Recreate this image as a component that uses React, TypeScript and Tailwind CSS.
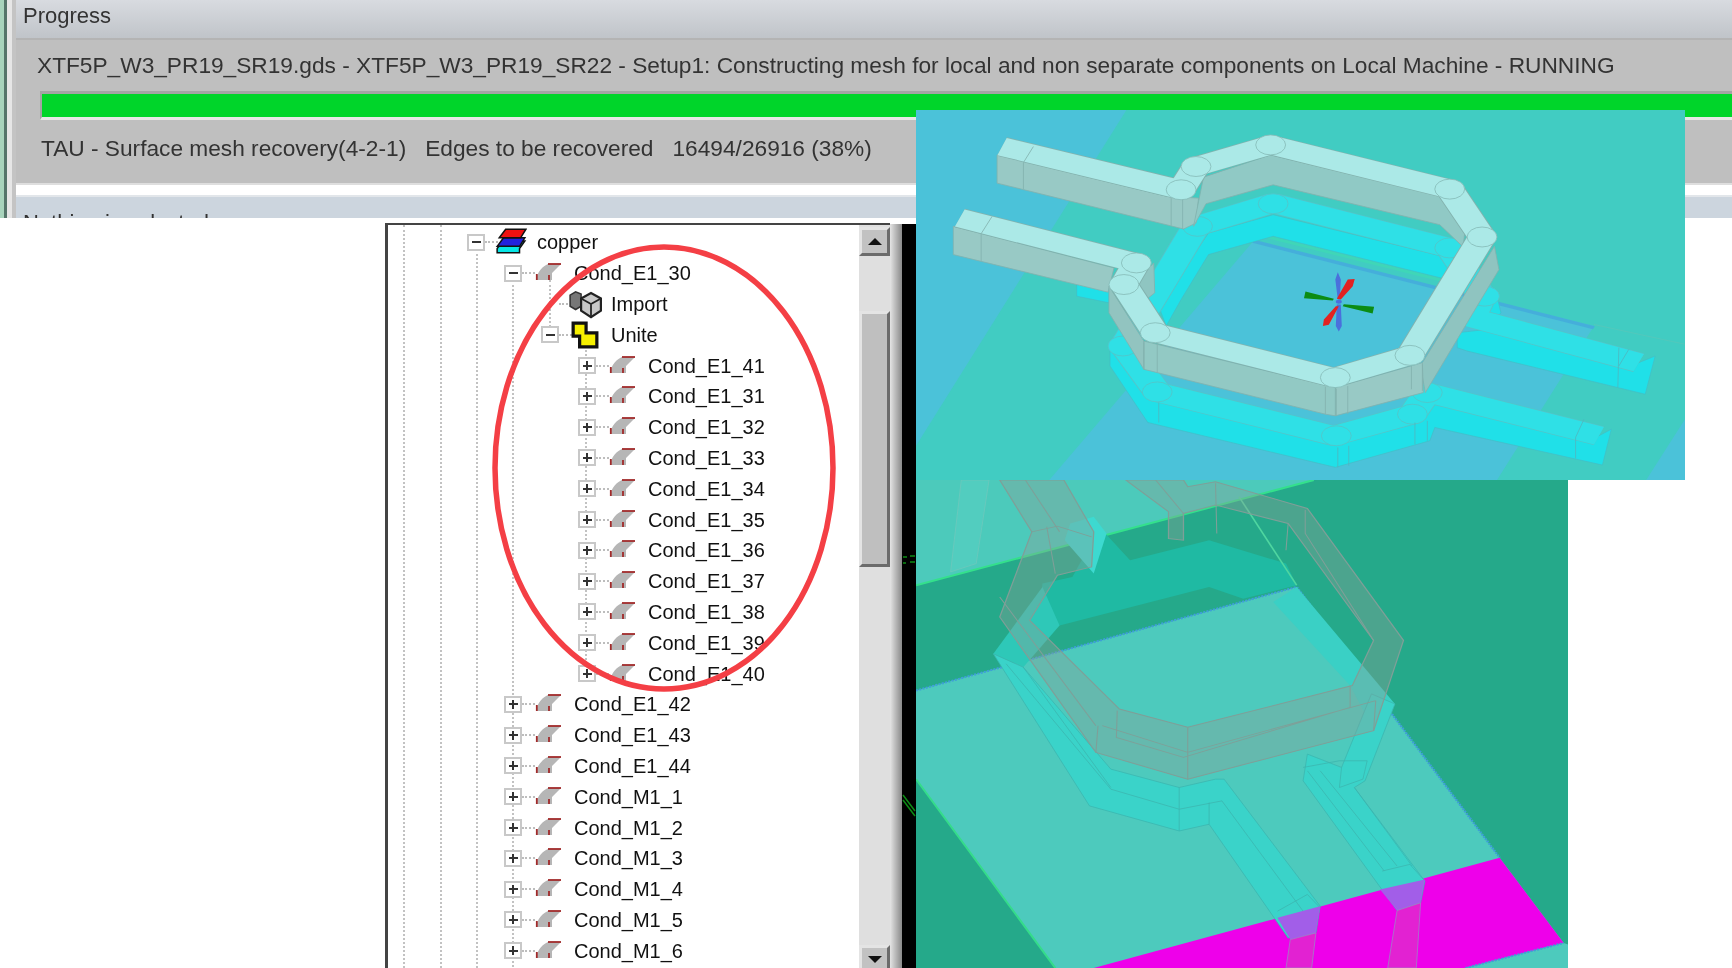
import React from 'react';

type Row = { label: string; depth: number; kind: 'layers' | 'cond' | 'import' | 'unite'; toggle?: '+' | '-' };

const depthClasses = ['pl-[79px]', 'pl-[116px]', 'pl-[153px]', 'pl-[190px]'];

const rows: Row[] = [
  { label: 'copper', depth: 0, kind: 'layers', toggle: '-' },
  { label: 'Cond_E1_30', depth: 1, kind: 'cond', toggle: '-' },
  { label: 'Import', depth: 2, kind: 'import' },
  { label: 'Unite', depth: 2, kind: 'unite', toggle: '-' },
  ...['41', '31', '32', '33', '34', '35', '36', '37', '38', '39', '40'].map(
    (n): Row => ({ label: `Cond_E1_${n}`, depth: 3, kind: 'cond', toggle: '+' }),
  ),
  ...['E1_42', 'E1_43', 'E1_44', 'M1_1', 'M1_2', 'M1_3', 'M1_4', 'M1_5', 'M1_6'].map(
    (n): Row => ({ label: `Cond_${n}`, depth: 1, kind: 'cond', toggle: '+' }),
  ),
];

function TreeIcon({ kind }: { kind: Row['kind'] }) {
  if (kind === 'layers') {
    return (
      <svg viewBox="0 0 30 24" className="-mt-[3px] h-[26px] w-[32px] shrink-0">
        <path d="M2 19 L8 12 L28 12 L23 19 L23 23 L2 23 Z" fill="#06e6e6" stroke="#111" strokeWidth="1.4" />
        <path d="M2 17 L8 9 L28 9 L23 17 Z" fill="#2222dd" stroke="#111" strokeWidth="1.4" />
        <path d="M4 9 L10 1 L29 1 L24 9 Z" fill="#ee1111" stroke="#111" strokeWidth="1.4" />
      </svg>
    );
  }
  if (kind === 'import') {
    return (
      <svg viewBox="0 0 30 26" className="h-[30px] w-[33px] shrink-0">
        <path d="M1 5 L6 2 L11 4 L11 15 L6 18 L1 15 Z" fill="#777" stroke="#333" strokeWidth="1.4" />
        <path d="M11 8 L20 3 L29 8 L29 19 L20 25 L11 19 Z" fill="#c8c8c8" stroke="#222" strokeWidth="2" />
        <path d="M11 8 L20 13 L29 8 M20 13 L20 25" fill="none" stroke="#222" strokeWidth="1.6" />
      </svg>
    );
  }
  if (kind === 'unite') {
    return (
      <svg viewBox="0 0 26 26" className="h-[28px] w-[28px] shrink-0">
        <path d="M2 2 L14 2 L14 11 L24 11 L24 24 L8 24 L8 14 L2 14 Z" fill="#f6f000" stroke="#111" strokeWidth="3" />
      </svg>
    );
  }
  return (
    <svg viewBox="0 0 27 20" className="-mt-[2px] h-[20px] w-[27px] shrink-0">
      <path d="M1 18 C2 10 8 4 13 2 L26 2 L17 11 L17 18 Z" fill="#b6b6b6" />
      <path d="M13 2 L26 2" stroke="#a12a2a" strokeWidth="1.8" />
      <path d="M1.8 12 L1.8 18 M14 13 L14 18" stroke="#a12a2a" strokeWidth="1.8" />
    </svg>
  );
}

function Toggle({ sign }: { sign?: '+' | '-' }) {
  if (!sign) return <span className="h-[17px] w-[18px] shrink-0" />;
  return (
    <span className="relative flex h-[17px] w-[18px] shrink-0 items-center justify-center border-2 border-[#c8c8c8] bg-white">
      <span className="h-[2px] w-[9px] bg-[#333]" />
      {sign === '+' && <span className="absolute h-[9px] w-[2px] bg-[#333]" />}
    </span>
  );
}

function TreeRow({ row }: { row: Row }) {
  return (
    <div className={`flex h-[30.8px] items-center ${depthClasses[row.depth]}`}>
      <Toggle sign={row.toggle} />
      <span className="h-0 w-[13px] shrink-0 border-t-2 border-dotted border-[#bdbdbd]" />
      <span className="flex w-[26px] shrink-0 items-center justify-center">
        <TreeIcon kind={row.kind} />
      </span>
      <span className="ml-[13px] text-[20px] leading-none text-[#111]">{row.label}</span>
    </div>
  );
}

function ScrollArrow({ up }: { up?: boolean }) {
  return (
    <div className="flex h-[29px] shrink-0 items-center justify-center border-r-[3px] border-b-[3px] border-[#6b6b6b] border-t-[3px] border-t-[#e4e4e4] border-l-[3px] border-l-[#e4e4e4] bg-[#c2c2c2]">
      <div
        className={`h-0 w-0 border-x-[7px] border-x-transparent ${up ? 'border-b-[7px] border-b-[#111]' : 'border-t-[7px] border-t-[#111]'}`}
      />
    </div>
  );
}

const upperRing = '185,140 545,270 575,200 725,135 1085,268 1150,412 1005,768 852,835 493,700 430,555 455,490 100,355';
const lowerRing = '730,310 575,380 430,740 497,878 852,1010 1010,945 1040,880 1385,1010';
const lowerRingTop = '730,310 1085,445 1150,590 1130,655 1465,790';

function TopModel() {
  return (
    <svg viewBox="12 30 1546 1113" preserveAspectRatio="none" className="h-full w-full blur-[0.5px]">
      <rect x="12" y="30" width="1546" height="1113" fill="#4bc2d9" />
      <path d="M435 30 L1558 30 L1558 960 L1480 1143 L1180 1143 L1375 680 L690 425 L280 1143 L12 1143 L12 1040 Z" fill="#41ccc2" />
      <path d="M690 425 L1375 685" stroke="#45aedb" strokeWidth="10" />
      <path d="M720 410 L1080 545" stroke="#3fd6b8" strokeWidth="12" />
      <path d="M1375 675 L1558 735" stroke="#52c8bc" strokeWidth="3" />

      {/* lower conductor */}
      <g fill="#20e0e8" stroke="#46bcc4" strokeWidth="1.5">
        <path d="M600 400 L730 345 L1070 470 L1100 540 L1080 540 L730 410 L600 465 L545 600 L515 680 L500 620 Z" />
        <path d="M335 530 L335 590 L400 610 L400 540 Z" />
        <path d="M402 740 L402 800 L478 970 L855 1105 L1045 1025 L1055 985 L1392 1098 L1410 990 L1385 1010 L1045 885 L1010 960 L852 1030 L497 900 L430 745 Z" />
        <path d="M1180 590 L1188 640 L1160 690 L1100 700 L1100 745 L1120 755 L1478 885 L1498 770 L1465 790 L1130 660 Z" />
      </g>
      <g fill="none" strokeLinejoin="round">
        <polyline points={lowerRing} stroke="#55c4c8" strokeWidth="60" />
        <polyline points={lowerRingTop} stroke="#55c4c8" strokeWidth="60" />
        <polyline points={lowerRing} stroke="#2fe0e6" strokeWidth="56" />
        <polyline points={lowerRingTop} stroke="#2fe0e6" strokeWidth="56" />
      </g>
      <g fill="#2fe0e6" stroke="#55c4c8" strokeWidth="2">
        {[[730, 312], [578, 380], [1085, 445], [1155, 590], [428, 740], [497, 878], [857, 1010], [1010, 945], [1040, 880]].map(([cx, cy]) => (
          <circle key={`${cx}-${cy}`} cx={cx} cy={cy} r="30" />
        ))}
      </g>
      <g fill="none" stroke="#4db8c0" strokeWidth="2">
        <path d="M500 910 L500 970 M860 1045 L860 1105 M882 1040 L882 1100 M1015 970 L1015 1035 M1040 965 L1040 1025" />
        <path d="M1338 1015 L1338 1078 M1355 960 L1338 1015 M1425 745 L1423 865 M1445 750 L1425 800" />
      </g>

      {/* upper conductor */}
      <g stroke="#83b2ae" strokeWidth="2">
        <path d="M175 165 L175 250 L550 388 L575 370 L580 295 L517 290 Z" fill="#98c9c5" />
        <path d="M590 232 L725 165 L1070 290 L1115 400 L1112 442 L1065 375 L730 255 L595 312 L570 380 Z" fill="#90c9c5" />
        <path d="M87 380 L87 465 L398 578 L410 505 Z" fill="#98c9c5" />
        <path d="M490 490 L492 580 L465 612 L450 555 Z" fill="#8fc5c1" />
        <path d="M1175 440 L1184 510 L1036 880 L1026 800 Z" fill="#8fc4c0" />
        <path d="M1030 790 L1032 880 L855 950 L855 865 Z" fill="#98c9c5" />
        <path d="M470 725 L470 810 L835 945 L855 950 L855 865 Z" fill="#92c9c4" />
        <path d="M400 560 L400 640 L470 810 L470 725 Z" fill="#92c4c0" />
      </g>
      <g fill="none" strokeLinejoin="round">
        <polyline points={upperRing} stroke="#83b2ae" strokeWidth="59" />
        <polyline points={upperRing} stroke="#abe9e7" strokeWidth="55" />
      </g>
      <g fill="#abe9e7" stroke="#86bbb8" strokeWidth="2">
        {[[545, 270], [575, 200], [725, 135], [1085, 268], [1150, 412], [1005, 768], [855, 835], [493, 700], [430, 555], [455, 490]].map(([cx, cy]) => (
          <circle key={`${cx}-${cy}`} cx={cx} cy={cy} r="30" />
        ))}
      </g>
      <g fill="none" stroke="#83b2ae" strokeWidth="2">
        <path d="M248 140 L228 188 L228 268 M165 350 L143 402 L143 485 M525 295 L525 378 M548 300 L548 388" />
        <path d="M470 730 L470 810 M497 735 L497 820 M835 862 L835 945 M857 868 L857 950 M880 860 L880 945 M1008 800 L1008 870 M1030 795 L1030 875" />
      </g>

      {/* axis triad */}
      <path d="M855 540 L860 518 L866 540 L864 600 L860 600 Z M858 615 L866 615 L868 680 L862 696 L856 680 Z" fill="#4a70dc" />
      <path d="M880 540 L894 538 L890 560 L866 600 L858 598 Z M856 620 L862 620 L842 676 L830 680 L832 660 Z" fill="#e22222" />
      <path d="M795 576 L792 596 L850 603 L852 598 Z M872 614 L870 620 L930 642 L933 622 Z" fill="#0c8c14" />
      <circle cx="862" cy="607" r="6" fill="#4a70dc" />
    </svg>
  );
}

function BottomModel() {
  return (
    <svg viewBox="14 10 1526 1460" preserveAspectRatio="none" className="h-full w-full blur-[0.6px]">
      <rect x="14" y="10" width="1526" height="1460" fill="#25a98a" />
      <path d="M14 10 L945 10 L14 325 Z" fill="#4ccabb" />
      <path d="M14 325 L945 10" stroke="#34e08c" strokeWidth="6" />
      <path d="M430 184 L460 174 L515 250 L700 190 L880 260 L905 325 L780 365 L700 330 L350 445 L300 430 L310 320 L380 300 Z" fill="#1fbaa3" />
      <path d="M14 640 L905 330 L1380 1140 L1530 1395 L1300 1470 L340 1470 L14 905 Z" fill="#4dcabd" />
      <path d="M14 640 L905 330 L1380 1140" fill="none" stroke="#3f9fd8" strokeWidth="6" strokeDasharray="5 3" />
      <path d="M14 905 L340 1470" stroke="#35dc8a" strokeWidth="5" />
      <path d="M770 60 L905 325" stroke="#4fd6a0" strokeWidth="4" />
      <path d="M430 1470 L1380 1140 L1530 1395 L1300 1470 Z" fill="#ee00ea" />
      <path d="M1300 1470 L1530 1395 L1540 1400 L1540 1470 Z" fill="#4dcabd" />
      <path d="M1300 1470 L1530 1395" stroke="#3f9fd8" strokeWidth="6" strokeDasharray="5 3" />

      {/* stubs fading out up top */}
      <path d="M120 10 L185 10 L155 260 L95 285 Z" fill="#52cdbf" stroke="#6fc8bc" strokeWidth="2" />
      <path d="M375 140 L430 120 L460 170 L430 290 L362 190 Z" fill="#3dd9d0" />

      {/* lower conductor, see-through */}
      <path d="M195 530 L310 330 L350 445 L265 570 Z" fill="#2ec8b8" />
      <path d="M850 375 L905 330 L1135 680 L1090 770 L1030 625 Z" fill="#3ad0c5" />
      <g fill="#3ad3c9" stroke="#3bb5ae" strokeWidth="2">
        <path d="M195 530 L420 985 L630 1060 L700 1040 L885 1380 L950 1365 L960 1285 L735 905 L715 905 L630 930 L470 875 L265 570 Z" />
        <path d="M920 910 L1140 1298 L1195 1275 L1205 1210 L1040 930 L1065 910 L1135 680 L1080 650 L1010 870 L930 830 Z" />
      </g>
      <g fill="none" stroke="#3bb5ae" strokeWidth="2">
        <path d="M225 560 L470 935 L630 995 L730 970 L920 1300 M265 570 L470 930 M630 930 L630 1060 M700 975 L700 1040" />
        <path d="M920 870 L1005 850 L1070 850 L1060 905 L1005 930 M1010 870 L1005 930 M930 880 L1110 1180 M960 880 L1140 1165 M1040 930 L1175 1165" />
        <path d="M860 1300 L930 1250 L960 1290 M1105 1180 L1170 1160 L1205 1210" />
      </g>
      <path d="M860 1320 L960 1285 L950 1365 L890 1385 Z M1100 1235 L1205 1205 L1195 1275 L1140 1298 Z" fill="#a25ee8" />
      <path d="M890 1385 L950 1365 L940 1470 L880 1470 Z M1140 1298 L1195 1275 L1185 1470 L1118 1470 Z" fill="#e222d2" stroke="#9a88c4" strokeWidth="2" />

      {/* upper conductor, see-through */}
      <path
        d="M210 10 L360 10 L430 165 L425 270 L345 295 L280 430 L490 695 L650 750 L1035 625 L1085 490 L885 140 L715 85 L640 110 L640 190 L605 185 L605 105 L505 10 L640 10 L650 30 L715 15 L930 95 L1155 490 L1085 760 L650 905 L435 825 L210 420 L285 165 Z"
        fill="#8e9d95"
        fillOpacity="0.38"
        stroke="#7f9f98"
        strokeWidth="3"
      />
      <g fill="none" stroke="#7f9f98" strokeWidth="2.5">
        <path d="M450 745 L650 825 L1090 670 M435 825 L440 745 M485 700 L483 780 L640 840 L1030 690 M650 750 L650 905 M1030 625 L1030 690 M1090 670 L1085 760" />
        <path d="M925 100 L925 170 L1085 490 M885 140 L880 220 M715 20 L718 170 M340 290 L320 150 M210 360 L435 745 M285 165 L345 148 L425 180 M270 10 L350 165 M575 10 L640 110" />
      </g>
    </svg>
  );
}

export default function App() {
  return (
    <div className="relative h-[968px] w-[1732px] overflow-hidden bg-white font-['Liberation_Sans',Arial,sans-serif]">
      {/* progress window */}
      <div className="flex h-[218px] overflow-hidden blur-[0.5px]">
        <div className="w-[4px] bg-[#a8d4bc]" />
        <div className="w-[3px] bg-[#55756a]" />
        <div className="w-[5px] bg-[#e6e6e6]" />
        <div className="w-[4px] bg-[#c4c4c4]" />
        <div className="flex min-w-0 flex-1 flex-col">
          <div className="flex h-[38px] shrink-0 items-center bg-gradient-to-b from-[#d8dbe0] to-[#c0c4c9] pl-[7px] text-[22px] leading-none text-[#333]">
            <span className="-mt-[6px]">Progress</span>
          </div>
          <div className="h-[2px] shrink-0 bg-[#b4b4b4]" />
          <div className="flex h-[143px] shrink-0 flex-col bg-[#bfbfbf]">
            <div className="flex h-[51px] shrink-0 items-center whitespace-nowrap pl-[21px] text-[22.7px] leading-none text-[#333]">
              XTF5P_W3_PR19_SR19.gds - XTF5P_W3_PR19_SR22 - Setup1: Constructing mesh for local and non separate components on Local Machine - RUNNING
            </div>
            <div className="ml-[24px] h-[29px] shrink-0 border-t-[3px] border-b-[3px] border-l-2 border-t-[#a4a4a4] border-b-[#e8e8e8] border-l-[#a4a4a4] bg-[#00d52a]" />
            <div className="flex h-[57px] shrink-0 items-center gap-[19px] whitespace-nowrap pl-[25px] text-[22.7px] leading-none text-[#333]">
              <span>TAU - Surface mesh recovery(4-2-1)</span>
              <span>Edges to be recovered</span>
              <span>16494/26916 (38%)</span>
            </div>
          </div>
          <div className="h-[14px] shrink-0 border-y-2 border-t-[#dedede] border-b-[#e2e6ea] bg-white" />
          <div className="flex-1 bg-[#ccd5de] pl-[7px] pt-[15px] text-[22px] leading-[22px] text-[#333]">
            Nothing is selected
          </div>
        </div>
      </div>

      {/* history tree */}
      <div className="flex h-[750px] pl-[385px] pt-[5px]">
        <div className="relative flex w-[505px] border-l-[3px] border-t-2 border-[#444] blur-[0.5px]">
          <div className="relative min-w-0 flex-1 overflow-hidden">
            {/* dotted guides of the tree */}
            <span className="absolute left-[15px] top-0 h-full border-l-2 border-dotted border-[#c2c2c2]" />
            <span className="absolute left-[52px] top-0 h-full border-l-2 border-dotted border-[#c2c2c2]" />
            <span className="absolute left-[88px] top-[24px] h-full border-l-2 border-dotted border-[#c2c2c2]" />
            <span className="absolute left-[124px] top-[55px] h-full border-l-2 border-dotted border-[#c2c2c2]" />
            <span className="absolute left-[161px] top-[55px] h-[55px] border-l-2 border-dotted border-[#c2c2c2]" />
            <span className="absolute left-[197px] top-[110px] h-[340px] border-l-2 border-dotted border-[#c2c2c2]" />
            <div className="relative pt-[2px]">
              {rows.map((row) => (
                <TreeRow key={row.label} row={row} />
              ))}
            </div>
          </div>
          <div className="flex w-[31px] shrink-0 flex-col bg-[#dfdfdf] pt-[2px]">
            <ScrollArrow up />
            <div className="h-[55px] shrink-0" />
            <div className="h-[256px] shrink-0 border-r-[3px] border-b-[3px] border-[#6b6b6b] border-l-[3px] border-t-[3px] border-l-[#e4e4e4] border-t-[#e4e4e4] bg-[#bfbfbf]" />
            <div className="flex-1" />
          </div>
        </div>
        <div className="mt-[1px] w-[12px] shrink-0 bg-gradient-to-r from-[#e4e4e4] to-[#8a8a8a]" />
        <div className="mt-[1px] w-[14px] shrink-0 bg-black" />
      </div>
      <div className="absolute left-[859px] top-[945px] w-[31px]">
        <ScrollArrow />
      </div>

      {/* green specks on the black strip */}
      <svg className="absolute left-[902px] top-[553px] h-[14px] w-[14px]" viewBox="0 0 14 14" fill="none" stroke="#0c8c14" strokeWidth="1.5">
        <path d="M1 4 L5 4 M8 3 L13 3 M1 10 L4 10 M8 9 L13 9" />
      </svg>
      <svg className="absolute left-[902px] top-[793px] h-[24px] w-[14px]" viewBox="0 0 14 24" fill="none" stroke="#0c8c14" strokeWidth="1.5">
        <path d="M1 2 L13 18 M1 7 L13 23" />
      </svg>

      {/* red annotation over the tree */}
      <svg className="absolute left-[490px] top-[243px] h-[450px] w-[350px]" viewBox="0 0 350 450" fill="none">
        <ellipse cx="174" cy="225" rx="169" ry="221" stroke="#f43f45" strokeWidth="5.5" />
      </svg>

      {/* pasted model views */}
      <div className="absolute left-[916px] top-[110px] h-[370px] w-[769px]">
        <TopModel />
      </div>
      <div className="absolute left-[916px] top-[480px] h-[488px] w-[652px]">
        <BottomModel />
      </div>
    </div>
  );
}
